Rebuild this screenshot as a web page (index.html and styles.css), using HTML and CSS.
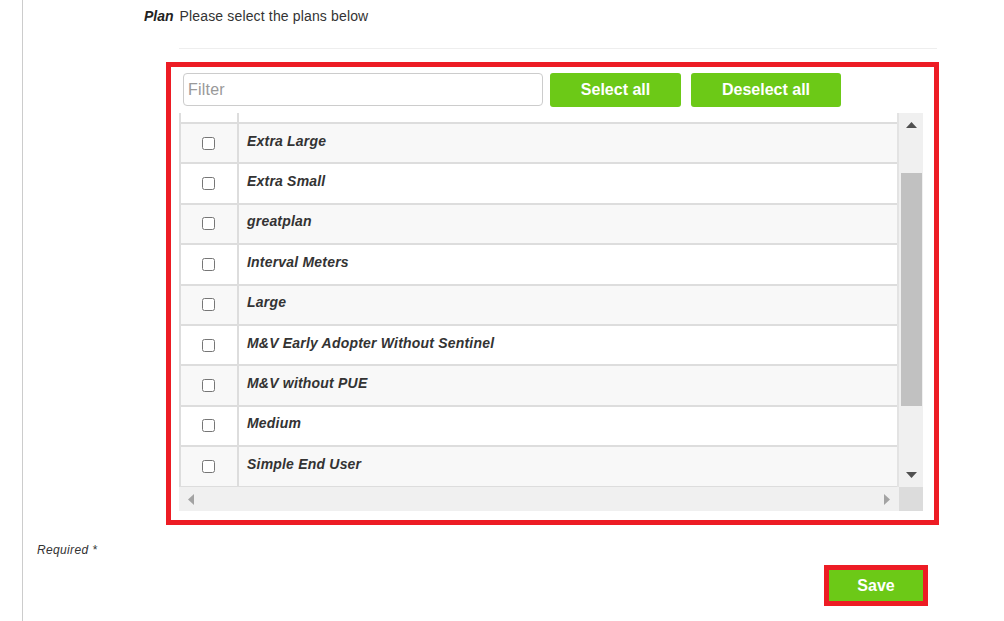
FILE: index.html
```html
<!DOCTYPE html>
<html>
<head>
<meta charset="utf-8">
<link rel="stylesheet" href="styles.css">
</head>
<body>
<div class="page">
  <div class="main">
    <div class="field-head"><span class="field-label">Plan</span><span class="field-help">Please select the plans below</span></div>
    <div class="divider"></div>
    <div class="picker">
      <div class="toolbar">
        <input class="filter" type="text" placeholder="Filter">
        <button class="btn btn-select">Select all</button>
        <button class="btn btn-deselect">Deselect all</button>
      </div>
      <div class="grid">
        <div class="grid-main">
          <div class="viewport">
            <div class="row row-partial"><div class="cell-check"></div><div class="cell-name"></div></div>
            <div class="row row-alt"><div class="cell-check"><input type="checkbox"></div><div class="cell-name">Extra Large</div></div>
            <div class="row"><div class="cell-check"><input type="checkbox"></div><div class="cell-name">Extra Small</div></div>
            <div class="row row-alt"><div class="cell-check"><input type="checkbox"></div><div class="cell-name">greatplan</div></div>
            <div class="row"><div class="cell-check"><input type="checkbox"></div><div class="cell-name">Interval Meters</div></div>
            <div class="row row-alt"><div class="cell-check"><input type="checkbox"></div><div class="cell-name">Large</div></div>
            <div class="row"><div class="cell-check"><input type="checkbox"></div><div class="cell-name">M&amp;V Early Adopter Without Sentinel</div></div>
            <div class="row row-alt"><div class="cell-check"><input type="checkbox"></div><div class="cell-name">M&amp;V without PUE</div></div>
            <div class="row"><div class="cell-check"><input type="checkbox"></div><div class="cell-name">Medium</div></div>
            <div class="row row-alt"><div class="cell-check"><input type="checkbox"></div><div class="cell-name">Simple End User</div></div>
            <div class="row"><div class="cell-check"></div><div class="cell-name"></div></div>
          </div>
          <div class="vscroll">
            <div class="sb-btn"><svg width="11" height="6" viewBox="0 0 11 6"><polygon points="0,6 11,6 5.5,0" fill="#505050"/></svg></div>
            <div class="vtrack"><div class="vthumb"></div></div>
            <div class="sb-btn"><svg width="11" height="6" viewBox="0 0 11 6"><polygon points="0,0 11,0 5.5,6" fill="#505050"/></svg></div>
          </div>
        </div>
        <div class="grid-bottom">
          <div class="hscroll">
            <div class="sb-btn"><svg width="6" height="11" viewBox="0 0 6 11"><polygon points="6,0 6,11 0,5.5" fill="#a3a3a3"/></svg></div>
            <div class="htrack"></div>
            <div class="sb-btn"><svg width="6" height="11" viewBox="0 0 6 11"><polygon points="0,0 0,11 6,5.5" fill="#a3a3a3"/></svg></div>
          </div>
          <div class="corner"></div>
        </div>
      </div>
    </div>
    <div class="required">Required *</div>
    <div class="save-wrap"><button class="btn btn-save">Save</button></div>
  </div>
</div>
</body>
</html>
```

FILE: styles.css
```css
html, body {
  margin: 0;
  padding: 0;
  background: #ffffff;
  font-family: "Liberation Sans", Arial, sans-serif;
  color: #333333;
}

.page {
  padding-left: 22px;
  height: 621px;
  overflow: hidden;
}

.main {
  border-left: 1px solid #cccccc;
  height: 621px;
  box-sizing: border-box;
  padding-top: 8px;
}

.field-head {
  padding-left: 121px;
  font-size: 14px;
  line-height: 17px;
}

.field-label {
  font-weight: bold;
  font-style: italic;
  color: #222222;
  margin-right: 6px;
}

.field-help {
  color: #333333;
  letter-spacing: 0.15px;
}

.divider {
  margin-left: 156px;
  width: 758px;
  height: 1px;
  background: #eeeeee;
  margin-top: 23px;
}

.picker {
  margin-left: 143px;
  margin-top: 13px;
  width: 773px;
  height: 463px;
  box-sizing: border-box;
  border: 5px solid #ed1c24;
  padding: 6px 0 0 8px;
}

.toolbar {
  display: flex;
  align-items: flex-start;
  padding-left: 4px;
  height: 34px;
}

.filter {
  width: 360px;
  height: 33px;
  box-sizing: border-box;
  border: 1px solid #cccccc;
  border-radius: 4px;
  padding: 0 0 0 4px;
  margin: 0 7px 0 0;
  font-family: "Liberation Sans", Arial, sans-serif;
  font-size: 16px;
  letter-spacing: 0.2px;
  color: #333333;
  outline: none;
}

.filter::placeholder {
  color: #999999;
}

.btn {
  border: none;
  background: #6cc917;
  color: #ffffff;
  font-family: "Liberation Sans", Arial, sans-serif;
  font-weight: bold;
  font-size: 16px;
  border-radius: 3px;
  padding: 0;
  margin: 0;
  height: 34px;
}

.btn-select {
  width: 131px;
  margin-right: 10px;
}

.btn-deselect {
  width: 150px;
}

.grid {
  margin-top: 6px;
  width: 744px;
  height: 398px;
  display: flex;
  flex-direction: column;
}

.grid-main {
  display: flex;
  height: 374px;
}

.viewport {
  width: 718px;
  height: 374px;
  box-sizing: border-box;
  border-left: 2px solid #dddddd;
  overflow: hidden;
}

.row {
  display: flex;
  height: 40.4px;
  box-sizing: border-box;
  border-top: 2px solid #dddddd;
  background: #ffffff;
}

.row-alt {
  background: #f8f8f8;
}

.row-partial {
  height: 9px;
  border-top: none;
}

.cell-check {
  width: 58px;
  box-sizing: border-box;
  border-right: 2px solid #dddddd;
  display: flex;
  align-items: center;
  justify-content: center;
  padding-right: 2px;
}

.cell-check input {
  margin: 0;
  width: 13px;
  height: 13px;
}

.cell-name {
  flex: 1;
  display: flex;
  align-items: center;
  padding-left: 8px;
  padding-bottom: 5px;
  font-size: 14px;
  letter-spacing: 0.2px;
  font-weight: bold;
  font-style: italic;
  color: #333333;
}

.vscroll {
  width: 26px;
  box-sizing: border-box;
  border-left: 2px solid #e3e3e3;
  background: #f0f0f0;
  display: flex;
  flex-direction: column;
}

.sb-btn {
  width: 24px;
  height: 24px;
  display: flex;
  align-items: center;
  justify-content: center;
  flex: none;
}

.vscroll .sb-btn svg {
  display: block;
}

.vtrack {
  flex: 1;
  padding: 36px 1px 0 2px;
}

.vthumb {
  height: 233px;
  background: #c1c1c1;
}

.grid-bottom {
  display: flex;
  height: 24px;
}

.hscroll {
  width: 720px;
  display: flex;
  background: #f0f0f0;
}

.htrack {
  flex: 1;
}

.corner {
  width: 24px;
  height: 24px;
  background: #dcdcdc;
}

.required {
  margin-top: 18px;
  padding-left: 14px;
  font-size: 12px;
  line-height: 14px;
  letter-spacing: 0.35px;
  font-style: italic;
  color: #333333;
}

.save-wrap {
  margin-top: 8px;
  margin-left: 801px;
}

.btn-save {
  width: 104px;
  height: 41px;
  box-sizing: border-box;
  border: 5px solid #ed1c24;
  border-radius: 0;
}
```
